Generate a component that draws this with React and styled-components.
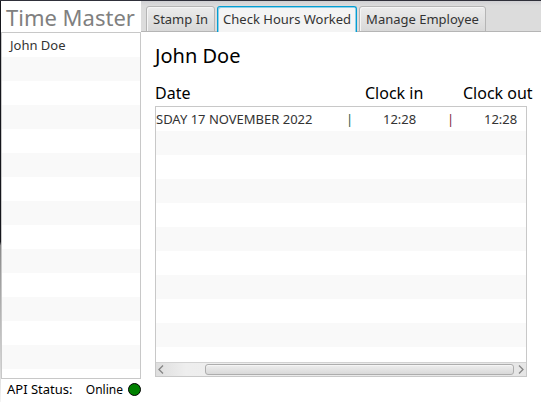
import React, { useState } from "react";
import styled, { createGlobalStyle } from "styled-components";

const GlobalStyle = createGlobalStyle`
  * { box-sizing: border-box; }
  body {
    margin: 0;
    background: #fff;
    color: #000;
    font-family: "Noto Sans", sans-serif;
    font-size: 13px;
  }
  button { font: inherit; }
`;

const Window = styled.div`
  display: grid;
  grid-template-columns: 1px 140px minmax(0, 1fr);
  min-height: 100vh;
  border-top: 1px solid #2f303a;
`;

const WindowEdge = styled.div`
  background: linear-gradient(#15161c 0 60%, #8a8a8a 61%, #d8d8d8 92%, #f4f4f4);
`;

const Sidebar = styled.aside`
  display: flex;
  flex-direction: column;
`;

const AppTitle = styled.h1`
  margin: 0;
  padding-left: 5px;
  height: 31px;
  line-height: 32px;
  font-size: 22px;
  font-weight: 400;
  color: #808080;
  white-space: nowrap;
`;

const stripes = "repeating-linear-gradient(#fff 0 24px, #f9f9f9 24px 48px)";

const EmployeeList = styled.ul`
  flex: 1;
  margin: 0;
  padding: 0;
  list-style: none;
  border: 1px solid #c8c8c8;
  background: ${stripes};
`;

const Employee = styled.button`
  display: block;
  width: 100%;
  height: 24px;
  padding: 0 8px;
  border: 0;
  background: none;
  color: #333;
  line-height: 24px;
  text-align: left;
`;

const StatusBar = styled.footer`
  display: flex;
  align-items: center;
  height: 23px;
  padding: 0 0 3px 6px;
  white-space: nowrap;
`;

const StatusValue = styled.span`
  margin-left: auto;
  margin-right: 5px;
  font-size: 12px;
`;

const StatusLight = styled.span`
  width: 13px;
  height: 13px;
  border: 1px solid #000;
  border-radius: 50%;
  background: #008000;
`;

const Main = styled.main`
  display: flex;
  flex-direction: column;
`;

const TabBar = styled.div`
  display: flex;
  align-items: flex-end;
  gap: 2px;
  height: 31px;
  padding-left: 5px;
  background: linear-gradient(#d0d0d3, #dcdcdc 5px);
  box-shadow: inset 0 -1px #b5b5b5;
`;

const Tab = styled.button`
  height: 26px;
  padding: 0 6px;
  border: 1px solid #b5b5b5;
  border-radius: 3px 3px 0 0;
  background: linear-gradient(#ececec, #d8d8d8);
  box-shadow: inset 1px 1px #f5f5f5;
  color: #333;
  line-height: 24px;
  white-space: nowrap;

  &[aria-selected="true"] {
    padding: 0 5px;
    border: 1px solid #039ed3;
    border-bottom: 0;
    background: #f4f4f4;
    box-shadow: inset 1px 1px #8fd0e8, inset -1px 0 #8fd0e8;
    line-height: 25px;
  }
`;

const Panel = styled.section`
  display: flex;
  flex: 1;
  flex-direction: column;
  padding: 10px 0 25px 14px;
`;

const PersonName = styled.h2`
  margin: 0 0 10px;
  font-size: 20px;
  font-weight: 400;
  line-height: 28px;
`;

const HeaderRow = styled.div`
  display: grid;
  grid-template-columns: minmax(0, 1fr) 98px 78px;
  height: 26px;
  font-size: 16px;
  line-height: 26px;
  white-space: nowrap;
`;

const HoursList = styled.div`
  display: flex;
  flex: 1;
  flex-direction: column;
  margin-right: 14px;
  border: 1px solid #c8c8c8;
`;

const Rows = styled.div`
  flex: 1;
  background: ${stripes};
`;

const HoursRow = styled.div`
  display: grid;
  grid-template-columns: minmax(0, 1fr) 37px 64px 37px 42px;
  height: 24px;
  line-height: 24px;
  color: #333;
  white-space: nowrap;
`;

const Divider = styled.span`
  color: ${(p) => (p.$tone === "in" ? "#1f5a4c" : "#7c2a3e")};
`;

const ScrollTrack = styled.div`
  display: grid;
  grid-template-columns: 10px minmax(0, 1fr) 11px;
  align-items: center;
  height: 14px;
  border-top: 1px solid #d2d2d2;
  background: linear-gradient(90deg, #dedede, #eee 30px, #e6e6e6);
`;

const ArrowButton = styled.button`
  display: flex;
  justify-content: center;
  padding: 0;
  border: 0;
  background: none;
  color: #858585;
`;

const ThumbRail = styled.div`
  padding: 0 1px 0 39px;
`;

const Thumb = styled.div`
  height: 11px;
  border: 1px solid #adadad;
  border-radius: 3px;
  background: linear-gradient(#eee, #d9d9d9);
  box-shadow: inset 0 1px #f5f5f5;
`;

const tabs = ["Stamp In", "Check Hours Worked", "Manage Employee"];
const entries = [{ date: "SDAY 17 NOVEMBER 2022", clockIn: "12:28", clockOut: "12:28" }];

function Arrow({ d }) {
  return (
    <svg width="6" height="9" viewBox="0 0 6 9" fill="none" stroke="currentColor" strokeWidth="1.3" aria-hidden="true">
      <path d={d} />
    </svg>
  );
}

export default function App() {
  const [active, setActive] = useState("Check Hours Worked");
  return (
    <>
      <GlobalStyle />
      <Window>
        <WindowEdge />
        <Sidebar>
          <AppTitle>Time Master</AppTitle>
          <EmployeeList>
            <li><Employee>John Doe</Employee></li>
          </EmployeeList>
          <StatusBar>
            <span>API Status:</span>
            <StatusValue>Online</StatusValue>
            <StatusLight />
          </StatusBar>
        </Sidebar>
        <Main>
          <TabBar role="tablist">
            {tabs.map((name) => (
              <Tab key={name} role="tab" aria-selected={name === active} onClick={() => setActive(name)}>
                {name}
              </Tab>
            ))}
          </TabBar>
          <Panel role="tabpanel" aria-label={active}>
            <PersonName>John Doe</PersonName>
            <HeaderRow>
              <span>Date</span>
              <span>Clock in</span>
              <span>Clock out</span>
            </HeaderRow>
            <HoursList>
              <Rows>
                {entries.map((entry) => (
                  <HoursRow key={entry.date}>
                    <span>{entry.date}</span>
                    <Divider $tone="in">|</Divider>
                    <span>{entry.clockIn}</span>
                    <Divider $tone="out">|</Divider>
                    <span>{entry.clockOut}</span>
                  </HoursRow>
                ))}
              </Rows>
              <ScrollTrack>
                <ArrowButton aria-label="Scroll left"><Arrow d="M5 .5 1 4.5l4 4" /></ArrowButton>
                <ThumbRail><Thumb /></ThumbRail>
                <ArrowButton aria-label="Scroll right"><Arrow d="m1 .5 4 4-4 4" /></ArrowButton>
              </ScrollTrack>
            </HoursList>
          </Panel>
        </Main>
      </Window>
    </>
  );
}
